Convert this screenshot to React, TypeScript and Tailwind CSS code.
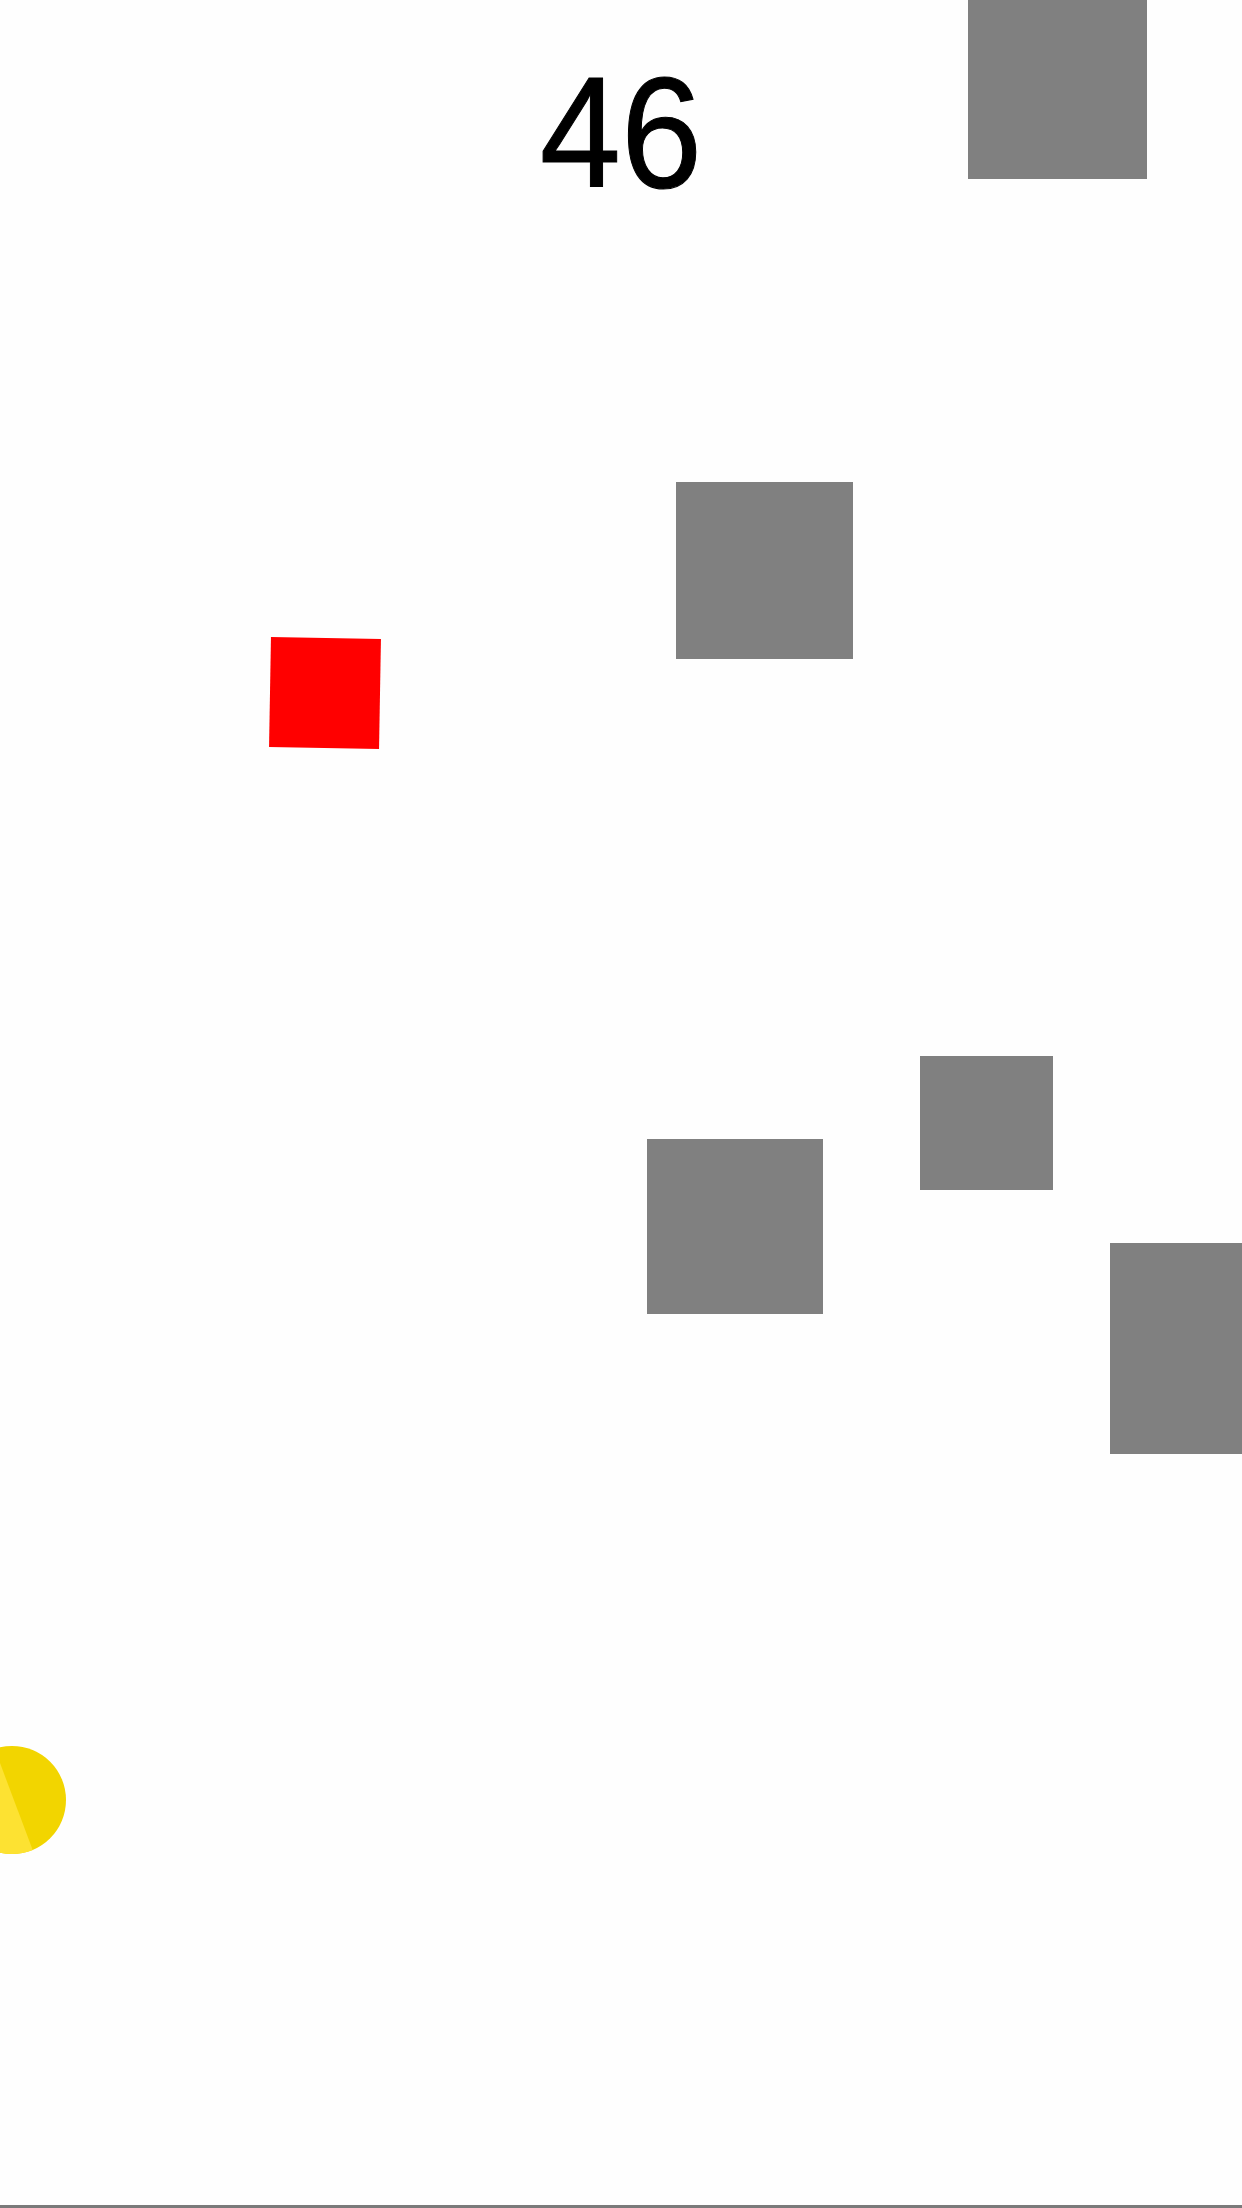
const blocks = [
  { id: 'b1', cls: 'left-[968px] top-0 w-[179px] h-[179px]' },
  { id: 'b2', cls: 'left-[676px] top-[482px] w-[177px] h-[177px]' },
  { id: 'b3', cls: 'left-[920px] top-[1056px] w-[133px] h-[134px]' },
  { id: 'b4', cls: 'left-[647px] top-[1139px] w-[176px] h-[175px]' },
  { id: 'b5', cls: 'left-[1110px] top-[1243px] w-[132px] h-[211px]' },
];

function Coin() {
  return (
    <svg className="absolute left-[-42px] top-[1746px]" width="108" height="108" viewBox="0 0 108 108">
      <defs>
        <clipPath id="coin">
          <circle cx="54" cy="54" r="54" />
        </clipPath>
      </defs>
      <circle cx="54" cy="54" r="54" fill="#f2d500" />
      <polygon points="0,0 35.6,0 76.2,108 0,108" fill="#fde232" clipPath="url(#coin)" />
    </svg>
  );
}

export default function App() {
  return (
    <div className="relative w-[1242px] h-[2208px] overflow-hidden bg-[#fefefe] border-b-[3px] border-[#7a7a7a]">
      <div className="absolute left-0 right-0 top-[60px] text-center text-[146px] leading-none text-black scale-y-[1.08] font-['Liberation_Sans',Arial,sans-serif] [-webkit-text-stroke:1px_black]">
        46
      </div>
      {blocks.map((b) => (
        <div key={b.id} className={`absolute bg-[#808080] ${b.cls}`} />
      ))}
      <div className="absolute left-[270px] top-[638px] w-[110px] h-[110px] bg-[#ff0000] rotate-[1deg]" />
      <Coin />
    </div>
  );
}
